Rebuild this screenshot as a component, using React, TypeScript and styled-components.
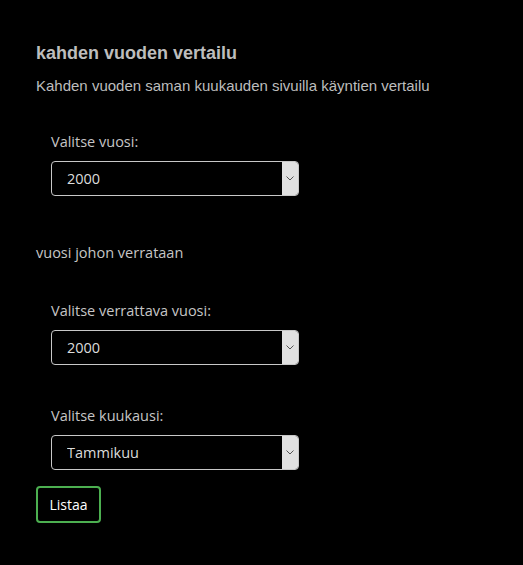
import React from "react";
import styled, { createGlobalStyle } from "styled-components";

const Global = createGlobalStyle`
  html, body { margin: 0; padding: 0; background: #000; }
  body { width: 523px; height: 565px; overflow: hidden; }
`;

const Page = styled.div`
  padding: 43px 36px 0 36px;
  color: #bfbfbf;
`;

const Title = styled.h2`
  margin: 0;
  font-family: "Liberation Sans", Arial, sans-serif;
  font-weight: bold;
  font-size: 18px;
  line-height: 20px;
  color: #bdbdbd;
`;

const Lead = styled.p`
  margin: 14px 0 0 0;
  font-family: "Liberation Sans", Arial, sans-serif;
  font-size: 15px;
  line-height: 18px;
  color: #bdbdbd;
`;

const Group = styled.div<{ $top: number }>`
  margin: ${(p) => p.$top}px 0 0 15px;
  display: flex;
  flex-direction: column;
  gap: 10px;
`;

const Label = styled.label`
  font-family: "Open Sans", "Noto Sans", sans-serif;
  font-size: 14.5px;
  line-height: 18px;
  color: #c6c6c6;
`;

const SelectBox = styled.div`
  width: 248px;
  height: 35px;
  box-sizing: border-box;
  border: 1px solid #c8c8c8;
  border-radius: 4px;
  overflow: hidden;
  display: flex;
  background: #000;
`;

const Select = styled.select`
  flex: 1;
  appearance: none;
  background: transparent;
  border: none;
  outline: none;
  color: #dcdcdc;
  font-family: "Open Sans", "Noto Sans", sans-serif;
  font-size: 14.5px;
  padding: 0 0 0 15px;
  margin: 0;
`;

const Arrow = styled.div`
  width: 16px;
  background: #e1e1e1;
  display: flex;
  align-items: center;
  justify-content: center;
`;

const Note = styled.div`
  margin-top: 48px;
  font-family: "Open Sans", "Noto Sans", sans-serif;
  font-size: 14.5px;
  line-height: 18px;
  color: #c6c6c6;
`;

const Button = styled.button`
  display: block;
  margin-top: 16px;
  width: 65px;
  height: 37px;
  box-sizing: border-box;
  border: 2px solid #4caf50;
  border-radius: 4px;
  background: #000;
  color: #fff;
  font-family: "Open Sans", "Noto Sans", sans-serif;
  font-size: 14px;
  padding: 0;
`;

const Chevron = () => (
  <svg width="8" height="5" viewBox="0 0 8 5">
    <path d="M0.5 0.5 L4 4 L7.5 0.5" fill="none" stroke="#555" strokeWidth="1" />
  </svg>
);

const Field = ({ label, value, top }: { label: string; value: string; top: number }) => (
  <Group $top={top}>
    <Label>{label}</Label>
    <SelectBox>
      <Select defaultValue={value}>
        <option>{value}</option>
      </Select>
      <Arrow>
        <Chevron />
      </Arrow>
    </SelectBox>
  </Group>
);

export default function App() {
  return (
    <>
      <Global />
      <Page>
        <Title>kahden vuoden vertailu</Title>
        <Lead>Kahden vuoden saman kuukauden sivuilla käyntien vertailu</Lead>
        <Field label="Valitse vuosi:" value="2000" top={38} />
        <Note>vuosi johon verrataan</Note>
        <Field label="Valitse verrattava vuosi:" value="2000" top={40} />
        <Field label="Valitse kuukausi:" value="Tammikuu" top={42} />
        <Button>Listaa</Button>
      </Page>
    </>
  );
}
